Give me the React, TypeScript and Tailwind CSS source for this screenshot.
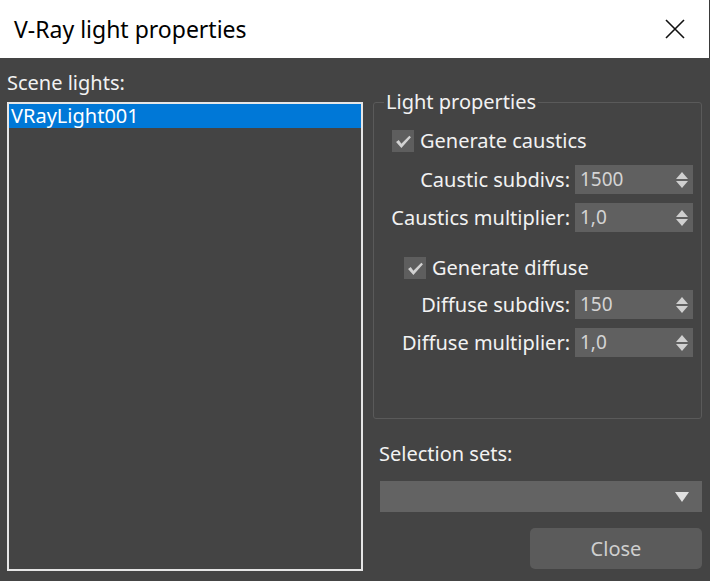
import React from 'react';

const font = { fontFamily: '"Noto Sans", "Open Sans", sans-serif' };

function Check() {
  return (
    <div className="w-[22px] h-[22px] bg-[#5e5e5e] flex items-center justify-center shrink-0">
      <svg width="17" height="15" viewBox="0 0 16 14">
        <path d="M1 7.5 L3.5 5.5 L6 9 L13.5 1.5 L15 3 L6 13 Z" fill="#d2d2d2" />
      </svg>
    </div>
  );
}

function Spin({ label, value }: { label: string; value: string }) {
  return (
    <div className="flex items-center justify-end h-[29px] gap-[5px]">
      <span className="text-[20px] text-[#f2f2f2] leading-none">{label}</span>
      <div className="w-[118px] h-[29px] bg-[#606060] flex items-center justify-between pl-[5px] pr-[4px]">
        <span className="text-[19px] text-[#d4d4d4] leading-none">{value}</span>
        <svg width="14" height="18" viewBox="0 0 14 18">
          <path d="M7 1 L13 8 L1 8 Z" fill="#d0d0d0" />
          <path d="M1 10 L13 10 L7 17 Z" fill="#d0d0d0" />
        </svg>
      </div>
    </div>
  );
}

export default function App() {
  return (
    <div className="w-[710px] h-[581px] bg-[#444444] flex flex-col overflow-hidden" style={font}>
      <div className="h-[58px] bg-white flex items-center justify-between pl-[14px] pr-[23px] border-r border-[#3a3a3a] shrink-0">
        <span className="text-[23px] text-black">V-Ray light properties</span>
        <svg width="22" height="22" viewBox="0 0 22 22">
          <path d="M2 2 L20 20 M20 2 L2 20" stroke="#111" strokeWidth="1.6" />
        </svg>
      </div>

      <div className="flex-1 flex pl-[7px] pr-[8px] pb-[10px] gap-[10px]">
        <div className="w-[356px] flex flex-col">
          <div className="h-[44px] flex items-center text-[20px] text-[#f2f2f2] pt-[5px]">Scene lights:</div>
          <div className="flex-1 border-2 border-[#e6e6e6] bg-[#444444]">
            <div className="h-[24px] bg-[#0078d7] text-white text-[20px] leading-[24px] pl-[2px]">VRayLight001</div>
          </div>
        </div>

        <div className="flex-1 flex flex-col">
          <fieldset className="mt-[33px] h-[328px] border border-[#5a5a5a] rounded-[3px] pr-[8px]">
            <legend className="ml-[10px] px-[2px] text-[20px] text-[#f2f2f2] leading-[22px]">Light properties</legend>
            <div className="flex items-center gap-[6px] ml-[18px] mt-[16px] h-[24px]">
              <Check />
              <span className="text-[20px] text-[#f2f2f2]">Generate caustics</span>
            </div>
            <div className="mt-[12px] flex flex-col gap-[9px]">
              <Spin label="Caustic subdivs:" value="1500" />
              <Spin label="Caustics multiplier:" value="1,0" />
            </div>
            <div className="flex items-center gap-[6px] ml-[30px] mt-[24px] h-[24px]">
              <Check />
              <span className="text-[20px] text-[#f2f2f2]">Generate diffuse</span>
            </div>
            <div className="mt-[10px] flex flex-col gap-[9px]">
              <Spin label="Diffuse subdivs:" value="150" />
              <Spin label="Diffuse multiplier:" value="1,0" />
            </div>
          </fieldset>

          <div className="mt-[20px] text-[20px] text-[#f2f2f2] h-[28px] ml-[6px]">Selection sets:</div>
          <div className="mt-[14px] ml-[7px] h-[31px] bg-[#636363] flex items-center justify-end pr-[13px]">
            <svg width="14" height="10" viewBox="0 0 14 10">
              <path d="M0 0 L14 0 L7 10 Z" fill="#e0e0e0" />
            </svg>
          </div>
          <div className="flex justify-end mt-[16px]">
            <button className="w-[172px] h-[41px] bg-[#5b5b5b] rounded-[5px] text-[20px] text-[#cfcfcf]">Close</button>
          </div>
        </div>
      </div>
    </div>
  );
}
